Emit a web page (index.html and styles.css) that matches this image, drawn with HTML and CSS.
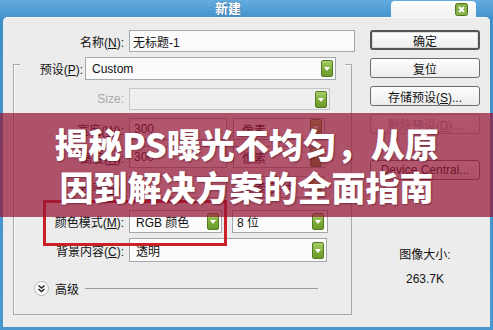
FILE: index.html
```html
<!DOCTYPE html>
<html lang="zh-CN">
<head>
  <meta charset="UTF-8">
  <title>新建</title>
  <link rel="stylesheet" href="styles.css">
</head>
<body>
  <div class="window">
    <div class="titlebar">
      <span class="title">新建</span>
      <div class="tab">
        <svg class="close" width="13" height="13" viewBox="0 0 13 13">
          <rect x="0.5" y="0.5" width="12" height="12" rx="2" fill="#86b143" stroke="#4f7424"/>
          <path d="M4 4 L9 9 M9 4 L4 9" stroke="#fff" stroke-width="2"/>
        </svg>
      </div>
    </div>

    <div class="client">
      <div class="form-col">
        <div class="row name-row">
          <label class="lbl">名称(<u>N</u>):</label>
          <div class="field name-field">无标题-1</div>
        </div>

        <div class="group">
          <div class="row preset-row">
            <label class="lbl preset-lbl">预设(<u>P</u>):</label>
            <div class="field select preset-field">Custom<span class="drop"></span></div>
          </div>

          <div class="row size-row">
            <label class="lbl disabled">Size:</label>
            <div class="field select size-field off"><span></span><span class="drop"></span></div>
          </div>

          <div class="row dim-row">
            <label class="lbl">宽度(<u>W</u>):</label>
            <div class="field num-field">300</div>
            <div class="field select unit-field">像素<span class="drop tall"></span></div>
          </div>

          <div class="row dim-row second">
            <label class="lbl">高度(<u>H</u>):</label>
            <div class="field num-field">300</div>
            <div class="field select unit-field">像素<span class="drop tall"></span></div>
          </div>

          <div class="row res-row">
            <label class="lbl">分辨率(<u>R</u>):</label>
            <div class="field num-field">72</div>
            <div class="field select unit-field">像素/英寸<span class="drop"></span></div>
          </div>

          <div class="row color-row">
            <label class="lbl">颜色模式(<u>M</u>):</label>
            <div class="field select mode-field">RGB 颜色<span class="drop"></span></div>
            <div class="field select bit-field">8 位<span class="drop"></span></div>
            <div class="highlight"></div>
          </div>

          <div class="row bg-row">
            <label class="lbl">背景内容(<u>C</u>):</label>
            <div class="field select bg-field">透明<span class="drop"></span></div>
          </div>

          <div class="row adv-row">
            <svg class="adv-icon" width="15" height="15" viewBox="0 0 15 15">
              <circle cx="7.5" cy="7.5" r="7" fill="#fafafa" stroke="#b4b4b4"/>
              <path d="M4.5 4.5 L7.5 7 L10.5 4.5 M4.5 8 L7.5 10.5 L10.5 8" fill="none" stroke="#222" stroke-width="1.4"/>
            </svg>
            <span class="adv-text">高级</span>
            <span class="adv-line"></span>
          </div>
        </div>
      </div>

      <div class="side-col">
        <button class="btn default">确定</button>
        <button class="btn">复位</button>
        <button class="btn">存储预设(<u>S</u>)...</button>
        <button class="btn off">删除预设(<u>D</u>)...</button>
        <button class="btn central">Device Central...</button>

        <div class="info">
          <p>图像大小:</p>
          <p>263.7K</p>
        </div>
      </div>
    </div>

    <div class="banner">
      <p>揭秘PS曝光不均匀，从原<br>因到解决方案的全面指南</p>
    </div>
  </div>
</body>
</html>
```

FILE: styles.css
```css
body {
  margin: 0;
  padding: 0;
  font-family: 'Liberation Sans', 'Noto Sans CJK SC', sans-serif;
  font-size: 12px;
  color: #111;
}

.window {
  position: relative;
  width: 493px;
  height: 330px;
  background: linear-gradient(#63ace0, #3f8fc8 20px, #4a98cf);
  overflow: hidden;
}

/* Title bar */
.titlebar {
  display: flex;
  height: 17px;
}

.title {
  margin-left: 215px;
  line-height: 18px;
  font-size: 13px;
  font-weight: 700;
  color: #fff;
  text-shadow: 0 0 2px rgba(0,0,0,0.35);
}

.tab {
  margin-left: auto;
  margin-right: 17px;
  margin-top: 1px;
  width: 85px;
  height: 16px;
  background: linear-gradient(#fdfdfd, #f1f1f1);
  border-radius: 4px 4px 0 0;
  display: flex;
  justify-content: flex-end;
  align-items: flex-start;
}

.close {
  margin: 2px 8px 0 0;
}

/* Client area */
.client {
  display: flex;
  height: 310px;
  margin: 0 3px;
  background: #ececec;
  border-radius: 5px 5px 0 0;
  box-shadow: inset 0 1px 0 #fafafa;
}

.form-col {
  width: 367px;
  padding-top: 13px;
}

.row {
  display: flex;
  align-items: center;
  height: 22px;
}

.lbl {
  width: 110px;
  padding-right: 5px;
  text-align: right;
  white-space: nowrap;
}

.lbl u {
  text-decoration: underline;
}

.lbl.disabled {
  color: #a9a9a9;
}

.name-row .lbl {
  width: 121px;
}

.field {
  box-sizing: border-box;
  height: 100%;
  background: #fbfbfb;
  border: 1px solid #a2a7ad;
  padding-left: 4px;
  display: flex;
  align-items: center;
  white-space: nowrap;
}

.select {
  justify-content: space-between;
  padding-right: 2px;
}

.drop {
  box-sizing: border-box;
  width: 12px;
  height: 17px;
  border: 1px solid #557a26;
  border-radius: 2px;
  background: linear-gradient(#a9cf68, #7aa936 60%, #6c9a2c);
  position: relative;
}

.drop::after {
  content: '';
  position: absolute;
  left: 2px;
  top: 6px;
  border-left: 3px solid transparent;
  border-right: 3px solid transparent;
  border-top: 4px solid #fff;
}

.name-field {
  width: 226px;
  padding-left: 3px;
}

/* Group box */
.group {
  box-sizing: border-box;
  margin: 12px 0 0 10px;
  width: 339px;
  height: 251px;
  border: 1px solid #a9a9a9;
  box-shadow: inset 1px 1px 0 #fafafa;
}

.preset-row {
  margin: -8px 0 0 6px;
  width: 325px;
  height: 23px;
  background: #ececec;
}

.preset-lbl {
  width: 63px;
  padding-right: 2px;
}

.preset-field {
  width: 251px;
  padding-left: 6px;
  padding-right: 2px;
}

.size-row {
  margin-top: 8px;
}

.size-field {
  width: 201px;
  background: #efefef;
  border-color: #c6c6c6;
}

.dim-row {
  margin-top: 8px;
}

.dim-row.second {
  margin-top: 6px;
}

.num-field {
  width: 98px;
  margin-right: 6px;
}

.unit-field {
  width: 92px;
  padding-left: 8px;
}

.drop.tall {
  height: 20px;
}

.res-row {
  margin-top: 8px;
}

.color-row {
  position: relative;
  margin-top: 12px;
  height: 23px;
}

.mode-field {
  width: 93px;
  padding-left: 6px;
  margin-right: 10px;
}

.bit-field {
  width: 96px;
  padding-left: 4px;
  padding-right: 3px;
}

.highlight {
  position: absolute;
  left: 29px;
  top: -10px;
  width: 184px;
  height: 46px;
  box-sizing: border-box;
  border: 3px solid #cc2027;
}

.bg-row {
  margin-top: 5px;
  height: 24px;
}

.bg-field {
  width: 198px;
  padding-left: 6px;
}

.adv-row {
  margin-top: 18px;
  height: 16px;
  padding-left: 20px;
}

.adv-text {
  margin-left: 6px;
}

.adv-line {
  margin-left: 6px;
  width: 233px;
  height: 1px;
  background: #9c9c9c;
}

/* Right column */
.side-col {
  width: 110px;
  padding-top: 13px;
  display: flex;
  flex-direction: column;
}

.btn {
  height: 20px;
  margin: 0 0 8px;
  padding: 0;
  border: 1px solid #6b6b6b;
  border-radius: 3px;
  background: linear-gradient(#fdfdfd, #ededed);
  font-family: inherit;
  font-size: 12px;
  color: #111;
}

.btn.default {
  border: 2px solid #555;
  box-shadow: inset 0 0 0 1px #dcdcdc;
}

.btn.off {
  color: #a4a4a4;
  border-color: #b0b0b0;
}

.btn.central {
  margin-top: 18px;
}

.info {
  margin-top: 60px;
  text-align: center;
}

.info p {
  margin: 0 0 10px;
  line-height: 14px;
}

/* Overlay banner */
.banner {
  position: absolute;
  left: 0;
  top: 113px;
  width: 493px;
  height: 104px;
  background: rgba(150, 22, 55, 0.72);
  display: flex;
  align-items: center;
  justify-content: center;
}

.banner p {
  margin: 0;
  text-align: center;
  font-family: 'Noto Sans CJK SC', sans-serif;
  font-size: 34px;
  font-weight: 900;
  line-height: 43px;
  color: #fff;
  text-shadow: 1px 1px 2px rgba(60, 0, 10, 0.45);
}
```
